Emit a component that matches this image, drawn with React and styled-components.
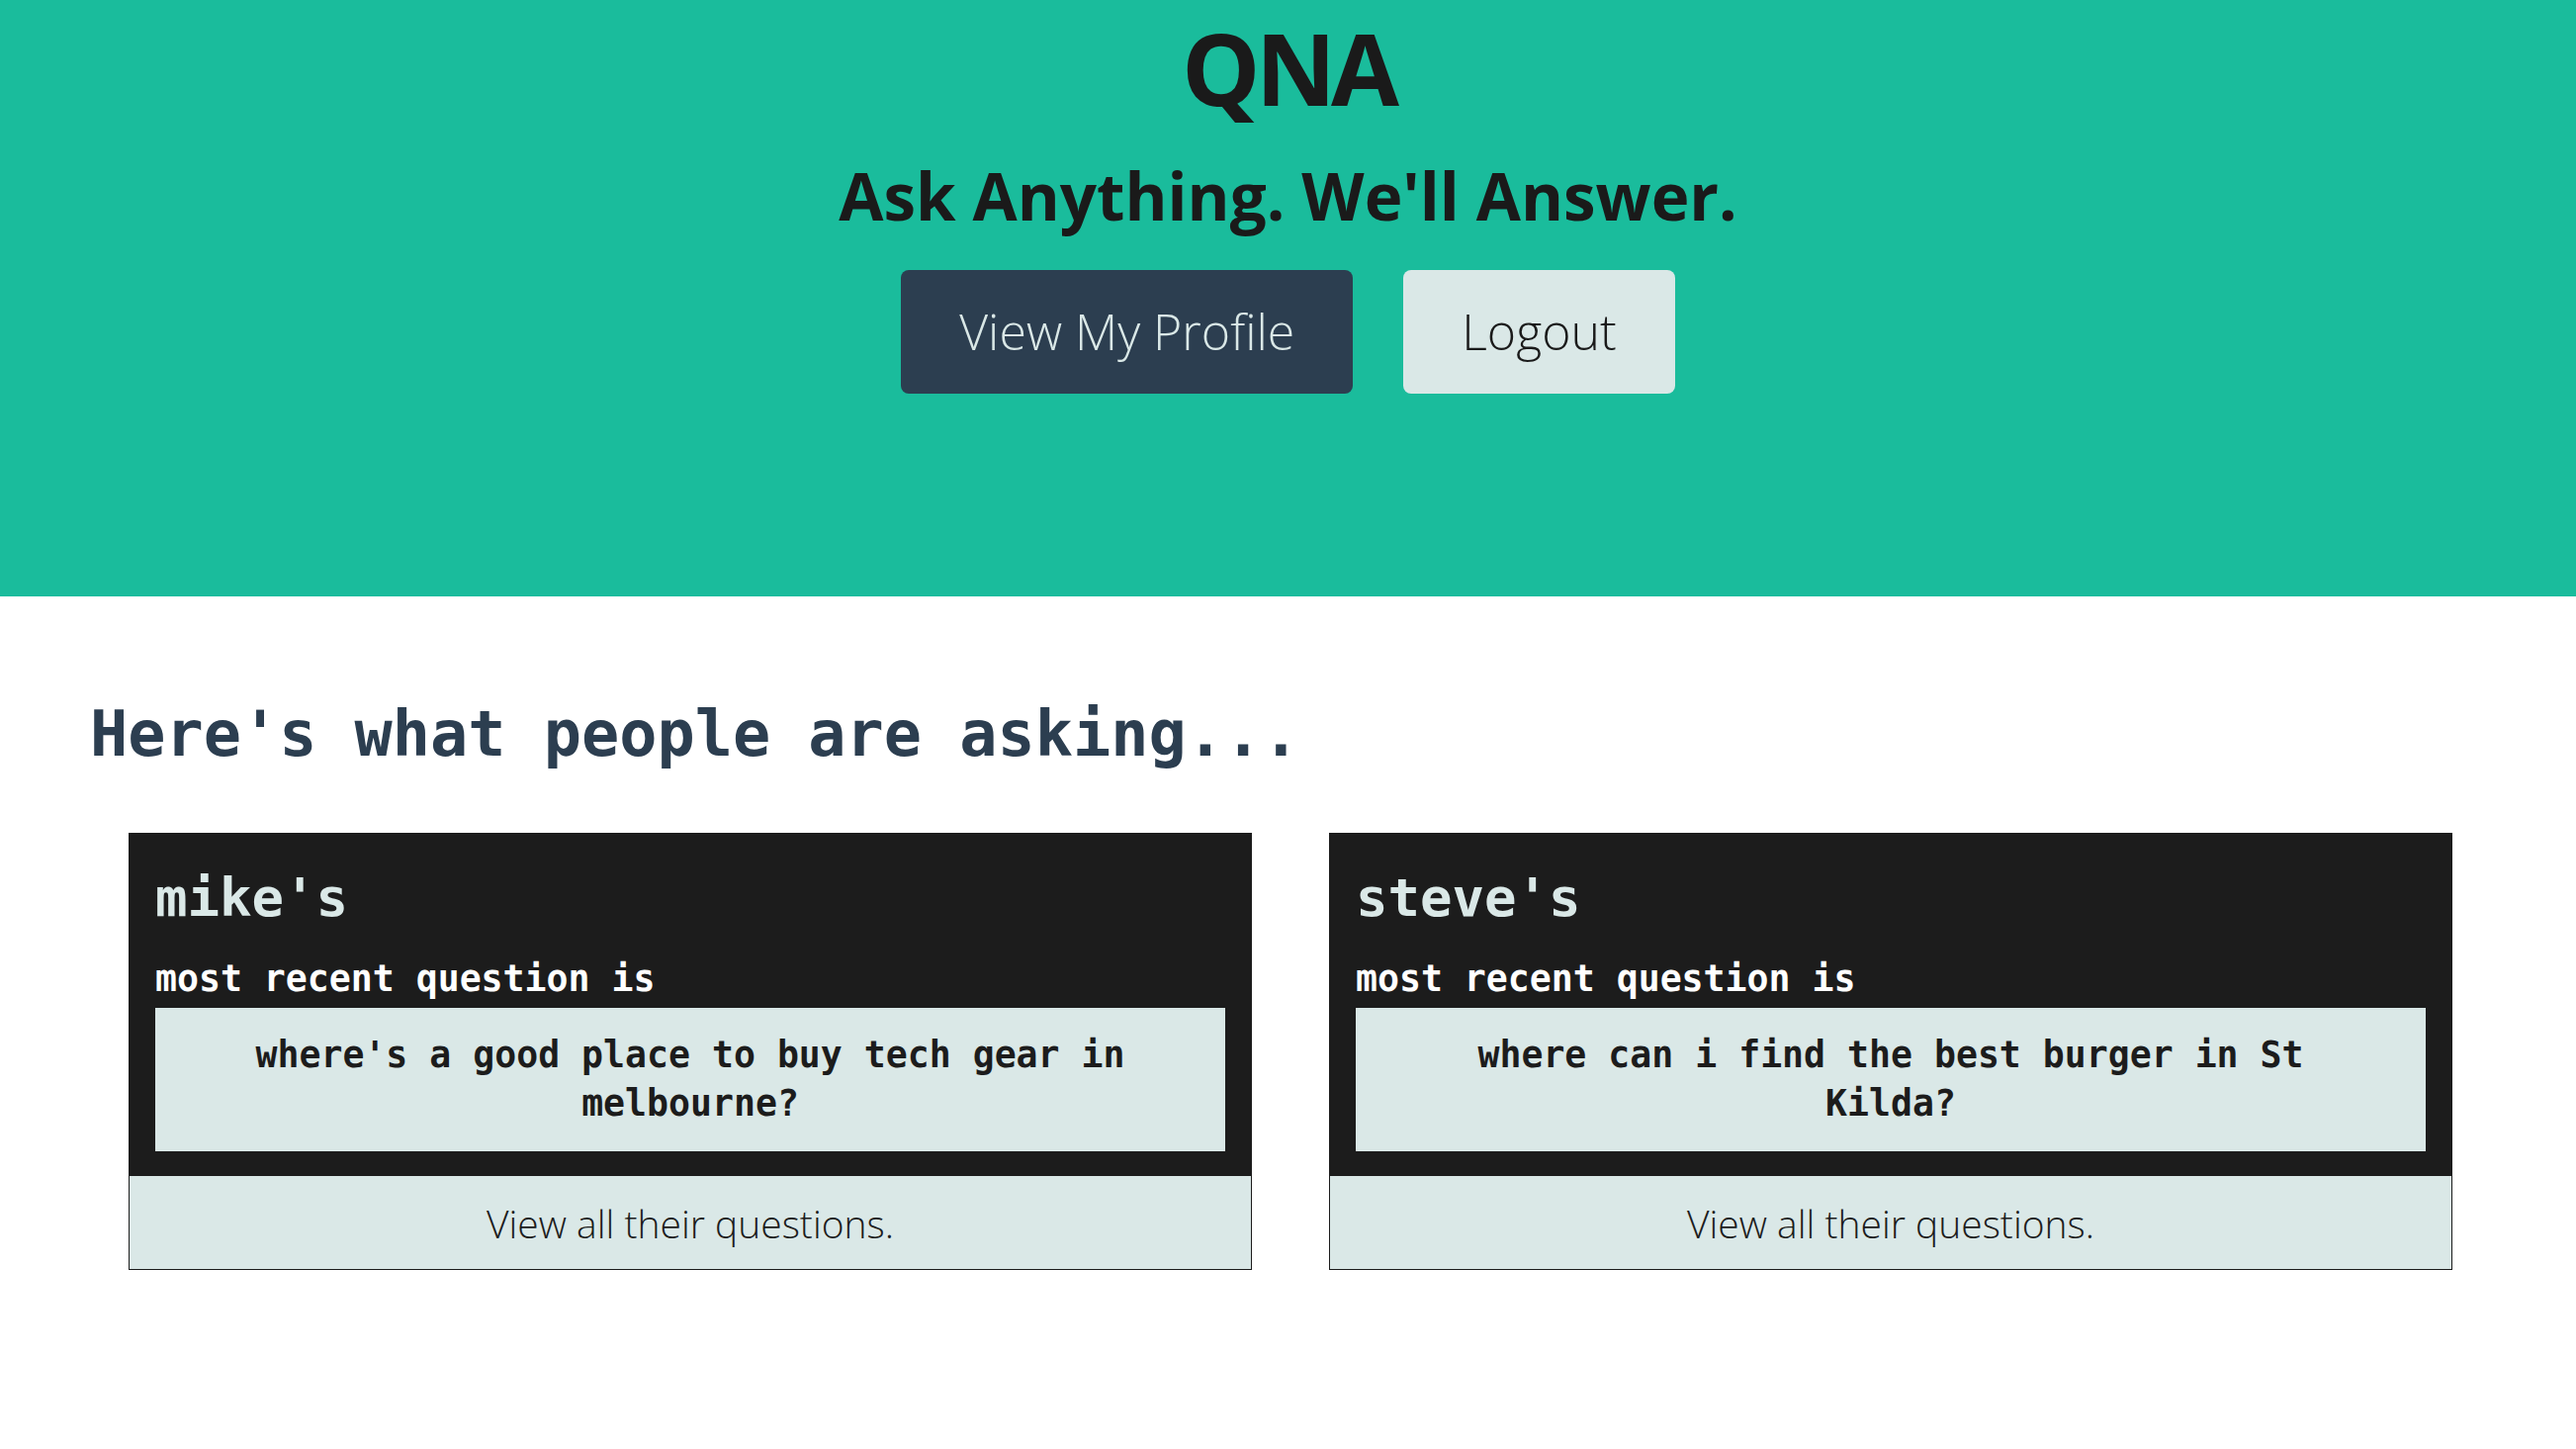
import React from 'react';
import styled, {createGlobalStyle} from "styled-components";

const users = [
    {name: "mike", question: "where's a good place to buy tech gear in melbourne?"},
    {name: "steve", question: "where can i find the best burger in St Kilda?"},
]

const App = () => {
    return (
        <>
            <GlobalStyle/>
            <Header>
                <Logo>QNA</Logo>
                <Tagline>Ask Anything. We'll Answer.</Tagline>
                <ButtonRow>
                    <HeaderButton dark>View My Profile</HeaderButton>
                    <HeaderButton>Logout</HeaderButton>
                </ButtonRow>
            </Header>
            <Main>
                <SectionTitle>Here's what people are asking...</SectionTitle>
                <CardGrid>
                    {users.map(user => (
                        <Card key={user.name}>
                            <CardBody>
                                <UserName>{user.name}'s</UserName>
                                <Label>most recent question is</Label>
                                <Question>{user.question}</Question>
                            </CardBody>
                            <CardFooter href="#">View all their questions.</CardFooter>
                        </Card>
                    ))}
                </CardGrid>
            </Main>
        </>
    )
}

export default App

const GlobalStyle = createGlobalStyle`
  body {
    margin: 0;
    background: #fff;
    font-family: "Open Sans", "Noto Sans", sans-serif;
  }
`

const Header = styled.header`
  background: #1abc9c;
  height: 603px;
  box-sizing: border-box;
  padding-top: 8px;
  display: flex;
  flex-direction: column;
  align-items: center;
`

const Logo = styled.h1`
  margin: 0;
  font-size: 100px;
  line-height: 1.2;
  font-weight: 700;
  color: #1a1a1a;
  letter-spacing: -5px;
`

const Tagline = styled.h2`
  margin: 37px 0 0;
  font-size: 65.5px;
  line-height: 1;
  font-weight: 700;
  color: #1a1a1a;
`

const ButtonRow = styled.div`
  display: flex;
  gap: 51px;
  margin-top: 42px;
`

const HeaderButton = styled.button`
  height: 125px;
  padding: 0 59px;
  border: none;
  border-radius: 8px;
  font-family: "Open Sans", "Noto Sans", sans-serif;
  font-size: 50px;
  font-weight: 300;
  background: ${({dark}) => dark ? "#2c3e50" : "#dae8e7"};
  color: ${({dark}) => dark ? "#dae8e7" : "#1a1a1a"};
  cursor: pointer;
`

const Main = styled.main`
  padding: 108px 91px 0;
`

const SectionTitle = styled.h3`
  margin: 0;
  font-family: "DejaVu Sans Mono", monospace;
  font-size: 63.5px;
  line-height: 1;
  font-weight: 700;
  color: #2c3e50;
`

const CardGrid = styled.div`
  display: grid;
  grid-template-columns: 1136px 1136px;
  gap: 78px;
  margin-top: 67px;
  padding-left: 39px;
`

const Card = styled.div`
  border: 1px solid #1c1c1c;
  display: flex;
  flex-direction: column;
`

const CardBody = styled.div`
  background: #1c1c1c;
  padding: 38px 26px 25px;
  font-family: "DejaVu Sans Mono", monospace;
  font-weight: 700;
`

const UserName = styled.div`
  font-size: 54px;
  line-height: 1;
  color: #dae8e7;
`

const Label = styled.div`
  margin: 33px 0 8px;
  font-size: 36.5px;
  line-height: 1.2;
  color: #fff;
`

const Question = styled.div`
  background: #dae8e7;
  color: #1c1c1c;
  padding: 23px 60px 24px;
  font-size: 36.5px;
  line-height: 49px;
  text-align: center;
`

const CardFooter = styled.a`
  background: #dae8e7;
  height: 94px;
  display: flex;
  align-items: center;
  justify-content: center;
  font-size: 39px;
  font-weight: 300;
  color: #1c1c1c;
  text-decoration: none;
`
